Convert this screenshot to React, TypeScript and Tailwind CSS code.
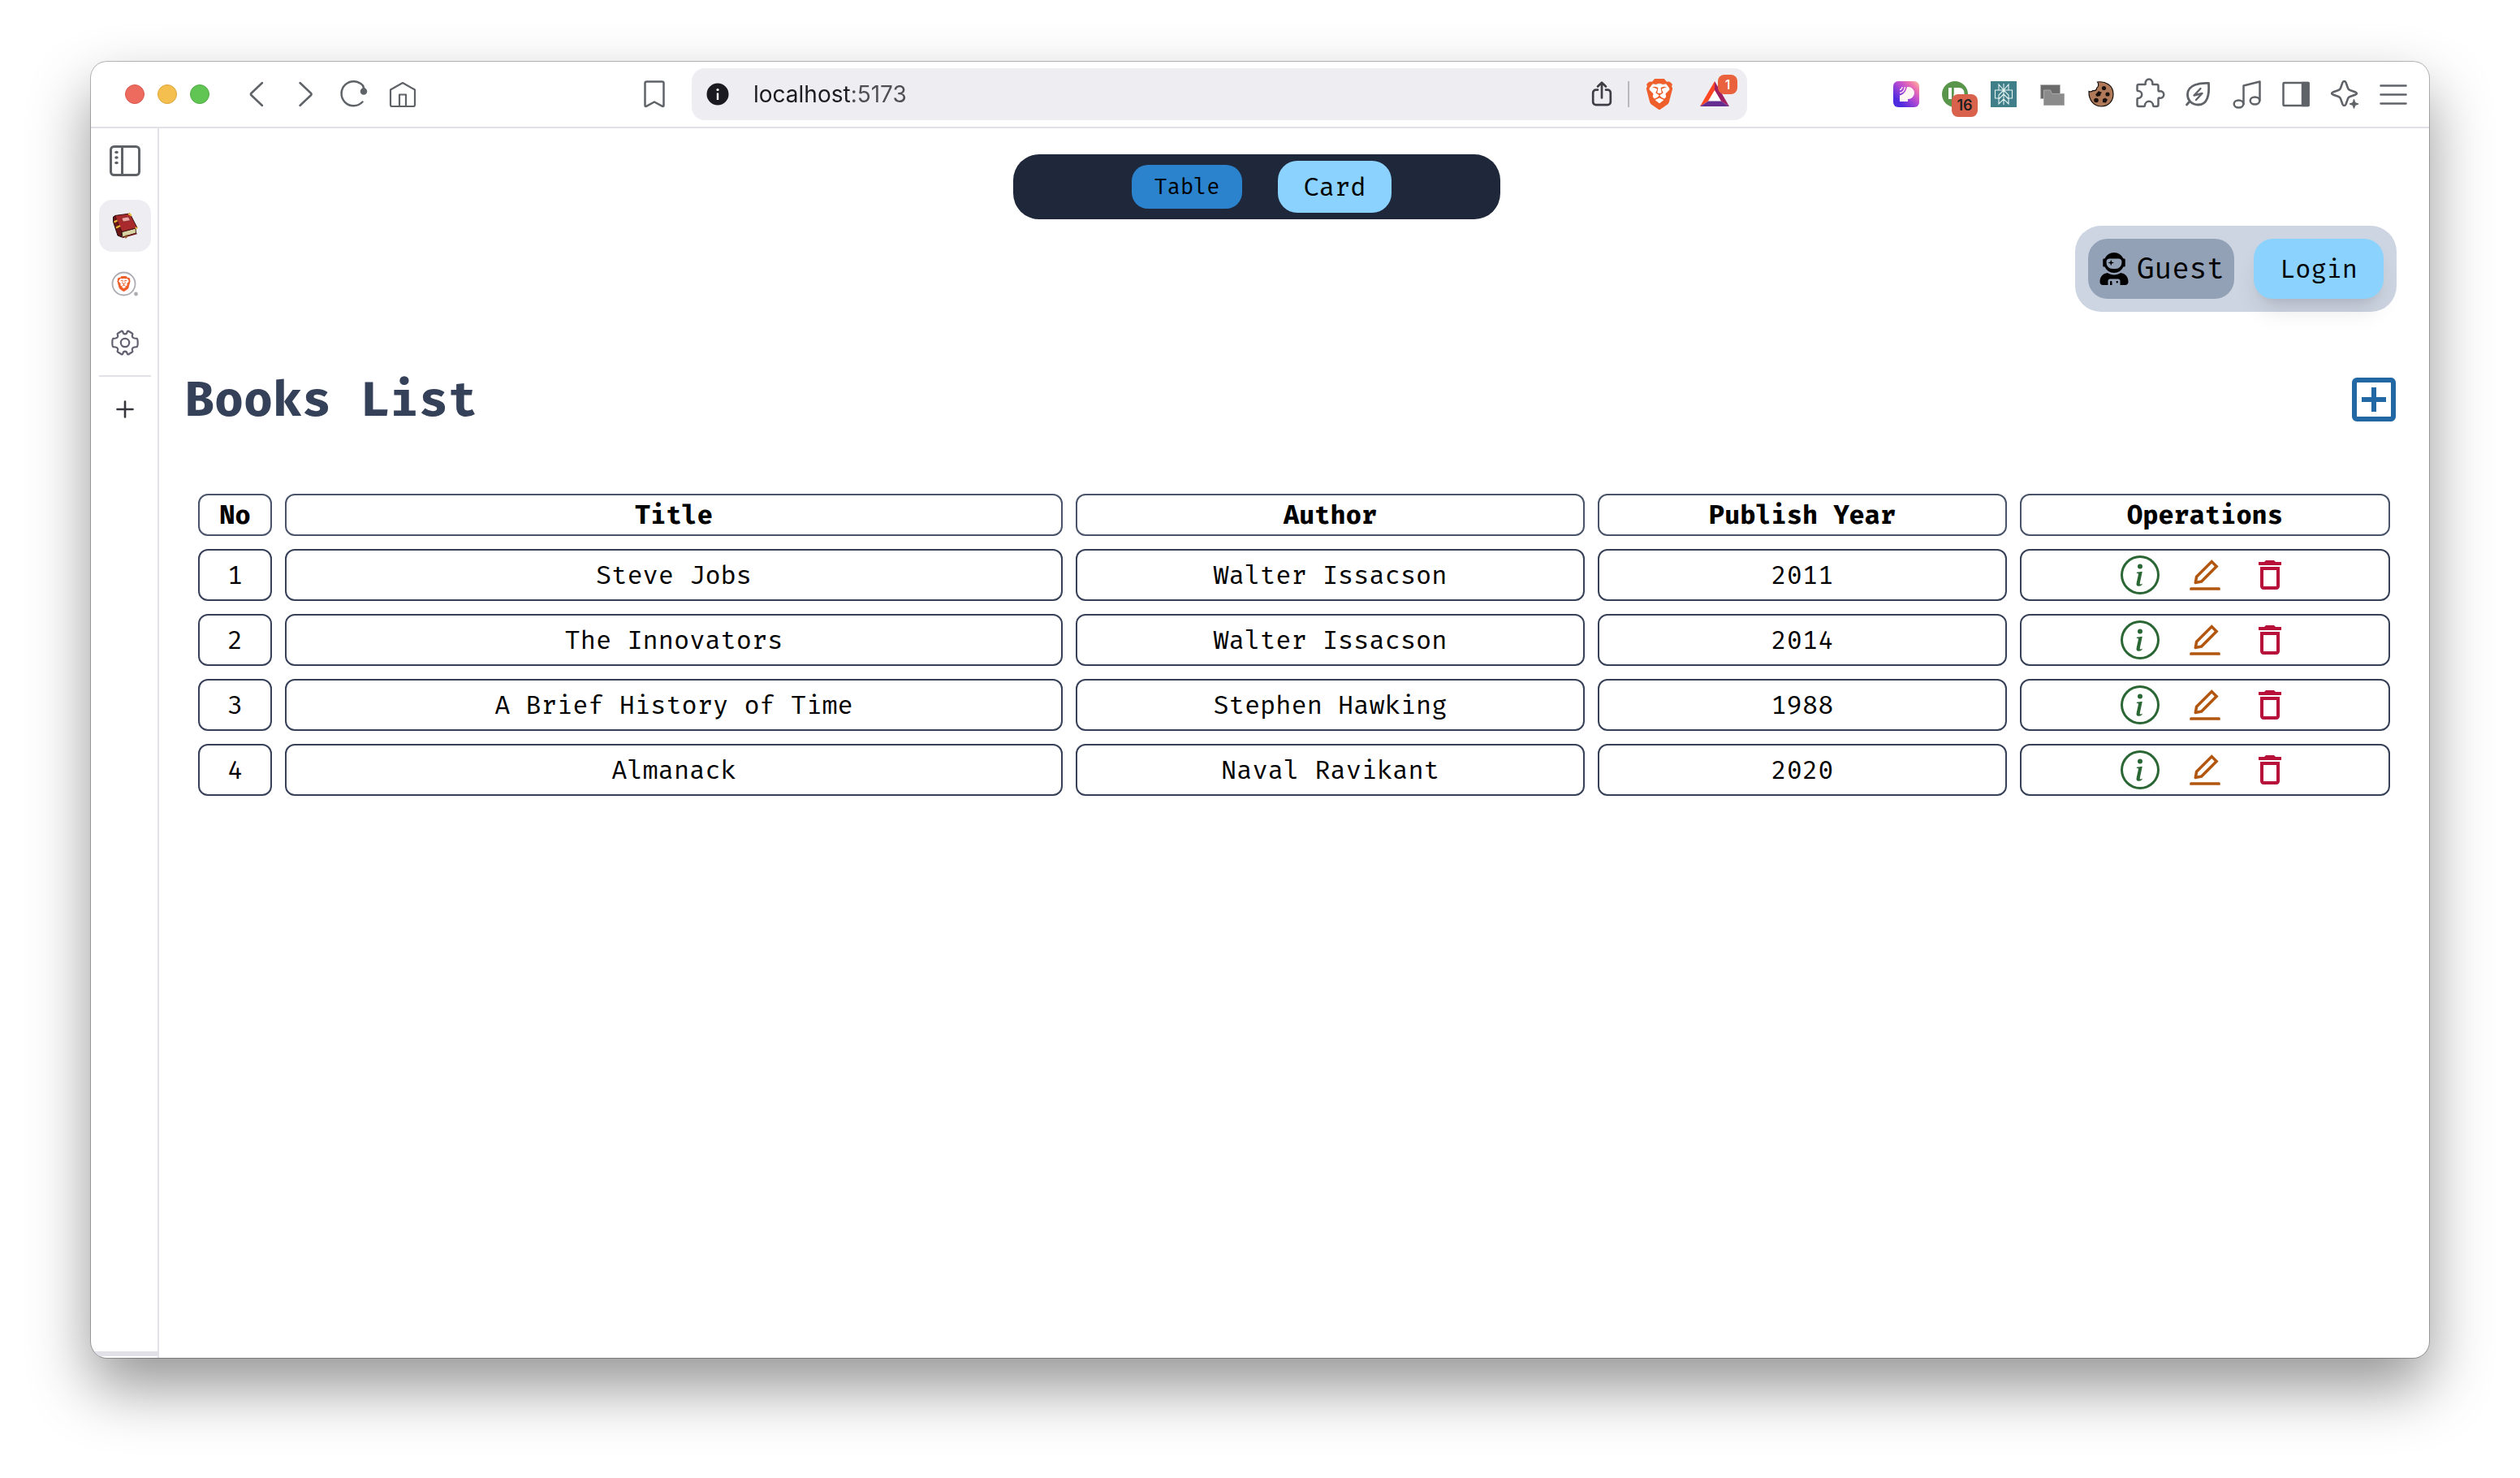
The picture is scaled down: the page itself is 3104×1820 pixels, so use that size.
import type { ReactNode } from "react";
import { AiOutlineEdit } from "react-icons/ai";
import { BsInfoCircle } from "react-icons/bs";
import { FaUserAstronaut } from "react-icons/fa";
import { MdOutlineAddBox, MdOutlineDelete } from "react-icons/md";
import { SiBrave } from "react-icons/si";

const books = [
  { no: 1, title: "Steve Jobs", author: "Walter Issacson", year: 2011 },
  { no: 2, title: "The Innovators", author: "Walter Issacson", year: 2014 },
  { no: 3, title: "A Brief History of Time", author: "Stephen Hawking", year: 1988 },
  { no: 4, title: "Almanack", author: "Naval Ravikant", year: 2020 },
];

const columns = [
  { label: "No", width: "w-[91px]" },
  { label: "Title", width: "w-[958px]" },
  { label: "Author", width: "w-[627px]" },
  { label: "Publish Year", width: "w-[504px]" },
  { label: "Operations", width: "w-[456px]" },
];

function Line({ children, size = 40, stroke = 2.5 }: { children: ReactNode; size?: number; stroke?: number }) {
  return (
    <svg
      width={size}
      height={size}
      viewBox="0 0 40 40"
      fill="none"
      stroke="currentColor"
      strokeWidth={stroke}
      strokeLinecap="round"
      strokeLinejoin="round"
      aria-hidden="true"
    >
      {children}
    </svg>
  );
}

function BarButton({ label, children }: { label: string; children: ReactNode }) {
  return (
    <button type="button" aria-label={label} className="relative flex h-15 w-15 shrink-0 items-center justify-center text-[#5f6368]">
      {children}
    </button>
  );
}

function SideButton({ label, active, children }: { label: string; active?: boolean; children: ReactNode }) {
  return (
    <button
      type="button"
      aria-label={label}
      className={
        active
          ? "flex h-16 w-16 items-center justify-center rounded-2xl bg-[#eeedf2]"
          : "flex h-16 w-16 items-center justify-center rounded-2xl text-[#5f6368]"
      }
    >
      {children}
    </button>
  );
}

function Lion({ size }: { size: number }) {
  return (
    <svg width={size} height={size} viewBox="0 0 24 24" aria-hidden="true">
      <path d="M5 5h14l1.500 6-3.500 7-5 4-5-4-3.500-7z" fill="#fff" />
      <SiBrave size={24} color="#ef5f2b" />
    </svg>
  );
}

function Toolbar() {
  return (
    <header className="flex h-[82px] items-center border-b-2 border-[#e2e1e8] pr-3.5 pl-[42px]">
      <div className="flex gap-4">
        <button type="button" aria-label="Close" className="h-6 w-6 rounded-full border border-[#d9574b] bg-[#ec6a5e]" />
        <button type="button" aria-label="Minimize" className="h-6 w-6 rounded-full border border-[#dba53d] bg-[#f4bf4f]" />
        <button type="button" aria-label="Zoom" className="h-6 w-6 rounded-full border border-[#51ab44] bg-[#61c554]" />
      </div>
      <nav className="ml-7 flex" aria-label="History">
        <BarButton label="Back">
          <Line><path d="M27 6 13.300 19a1.400 1.400 0 0 0 0 2L27 34" /></Line>
        </BarButton>
        <BarButton label="Forward">
          <Line><path d="M13.500 6 27.200 19a1.400 1.400 0 0 1 0 2L13.500 34" /></Line>
        </BarButton>
        <BarButton label="Reload">
          <Line>
            <path d="M30.500 29.500A15 15 0 1 1 31 9.500" />
            <path d="M31 9.500 33 15" />
            <circle cx="32" cy="16.500" r="3" fill="currentColor" />
          </Line>
        </BarButton>
        <BarButton label="Home">
          <Line stroke={2.2}>
            <path d="M5 14.500 20 6l15 8.500V33a2 2 0 0 1-2 2H7a2 2 0 0 1-2-2z" />
            <path d="M16 35V20.500h8V35" />
          </Line>
        </BarButton>
      </nav>
      <div className="ml-[250px]">
        <BarButton label="Bookmark">
          <Line>
            <path d="M8.500 6.500a2 2 0 0 1 2-2h19a2 2 0 0 1 2 2V34a1 1 0 0 1-1.600.8L20 29.500l-9.900 5.300A1 1 0 0 1 8.500 34z" />
          </Line>
        </BarButton>
      </div>
      <div className="mr-[166px] ml-4 flex h-16 flex-1 items-center rounded-2xl bg-[#eeedf2] pr-2 pl-[18px]">
        <button type="button" aria-label="Site information">
          <svg width="28" height="28" viewBox="0 0 28 28" aria-hidden="true">
            <circle cx="14" cy="14" r="13.500" fill="#1b1a20" />
            <circle cx="14" cy="8.500" r="1.600" fill="#fff" />
            <path d="M14 12.500v8.500" stroke="#fff" strokeWidth="2.400" />
          </svg>
        </button>
        <input
          type="text"
          aria-label="Address"
          defaultValue="localhost:5173"
          className="ml-[30px] min-w-0 flex-1 bg-[linear-gradient(to_right,#1b1a20_121px,#4f4e55_121px)] bg-clip-text font-['Inter',sans-serif] text-[28px] leading-9 text-transparent outline-none"
        />
        <button type="button" aria-label="Share" className="flex w-12 justify-center text-[#3f3e46]">
          <Line size={36} stroke={3}>
            <path d="M14.500 14H12a4 4 0 0 0-4 4v12.500a4 4 0 0 0 4 4h16a4 4 0 0 0 4-4V18a4 4 0 0 0-4-4h-2.500M20 25V4.500M14.500 9.500 20 4l5.500 5.500" />
          </Line>
        </button>
        <div className="ml-2 h-8 w-0.5 bg-[#b9b8bf]" />
        <button type="button" aria-label="Brave Shields" className="ml-[18px]">
          <Lion size={38} />
        </button>
        <button type="button" aria-label="Brave Rewards" className="relative ml-[17px] flex h-16 w-16 items-center justify-center">
          <svg width="40" height="34" viewBox="0 0 40 34" aria-hidden="true">
            <path d="M20 1 2 32l11-7 7-12z" fill="#ff4724" />
            <path d="M20 1v12l7 12 11 7z" fill="#9e1f63" />
            <path d="M2 32h36l-11-7H13z" fill="#662d91" />
            <path d="m20 12 8 13.500H12z" fill="#fff" />
          </svg>
          <span className="absolute top-2 right-1 flex h-6 w-6 items-center justify-center rounded-lg bg-[#e9613d] font-['Inter',sans-serif] text-base leading-6 font-medium text-white">
            1
          </span>
        </button>
      </div>
      <div className="flex">
        <BarButton label="Podcast extension">
          <svg width="32" height="32" viewBox="0 0 32 32" aria-hidden="true">
            <defs>
              <linearGradient id="podGradient" x1="0" y1="1" x2="1" y2="0">
                <stop offset="0.200" stopColor="#4d2bdf" />
                <stop offset="0.550" stopColor="#b64ad2" />
                <stop offset="0.800" stopColor="#f074ae" />
                <stop offset="1" stopColor="#f6c6a0" />
              </linearGradient>
            </defs>
            <rect width="32" height="32" rx="6" fill="url(#podGradient)" />
            <path d="M8 25V17.500c4.500-1 8-5 9-10.500h1.500a7.500 7.500 0 0 1 0 15H18v3z" fill="#fff5f3" />
            <path d="M8 10.500c1.500 0 3-1.500 3-3.500M8 14.500c3.500-.5 6-3.500 6.500-7.500" stroke="#fff5f3" strokeWidth="1.400" fill="none" />
          </svg>
        </BarButton>
        <BarButton label="Reading extension">
          <svg width="32" height="32" viewBox="0 0 32 32" aria-hidden="true">
            <circle cx="16" cy="16" r="16" fill="#59964b" />
            <path d="M8 8h4v14H8zM14.500 8h6c5 0 7 3 7 7s-2 7-7 7h-6zm3.500 3v8z" fill="#fff" />
            <path d="M12 8h2.500v8H12z" fill="#59964b" />
          </svg>
          <span className="absolute top-[30px] left-[26px] flex h-7 w-8 items-center justify-center rounded-lg bg-[#d9624d] font-['Inter',sans-serif] text-lg leading-7 font-semibold text-[#202020]">
            16
          </span>
        </BarButton>
        <BarButton label="Perplexity">
          <svg width="32" height="32" viewBox="0 0 32 32" aria-hidden="true">
            <rect width="32" height="32" fill="#407f8a" />
            <g stroke="#e6f4f1" strokeWidth="1.100" fill="none">
              <path d="M16 3v26M10 4v7h12V4l-6 7zM10 11H5.500v10H10M22 11h4.500v10H22M16 11l-6 6v11l6-6 6 6V17zM16 16l-6 6M16 16l6 6" />
            </g>
          </svg>
        </BarButton>
        <BarButton label="Window extension">
          <svg width="32" height="32" viewBox="0 0 32 32" aria-hidden="true">
            <path d="M1.500 4.500h24v17h-24z" fill="#6b6b6b" stroke="#b5b5b5" />
            <path d="M5.500 11h8l2 4.500h15v14h-25z" fill="#8b8b8b" stroke="#a9a9a9" />
          </svg>
        </BarButton>
        <BarButton label="Cookie editor">
          <svg width="34" height="34" viewBox="0 0 34 34" aria-hidden="true">
            <path
              d="M12.500 2C22 .5 32 6 32 17c0 8.500-6 15-14.500 15C9 32 1.500 25 2 13.500c2 1 3.500.5 5-1 2 .5 5-.5 4.500-3 2.500-1.500 3-5 1-7.500z"
              fill="#b07a5a"
              stroke="#15100d"
              strokeWidth="1.200"
            />
            <g fill="#1b1210">
              <circle cx="20.500" cy="9.500" r="2.600" />
              <circle cx="25" cy="17" r="2.600" />
              <circle cx="11" cy="24.500" r="2.800" />
              <path d="M10 17.500 14 13l3 2-1 4-4 1zM19 23l3-1.500 3 2-2 4-4-.5zM16 14l2 1-2 2z" />
            </g>
          </svg>
        </BarButton>
        <BarButton label="Extensions">
          <Line>
            <path d="M6.500 8H14c.8 0 1-.6.800-1.200a4.300 4.300 0 1 1 8.400 0c-.2.600 0 1.200.800 1.200h4.500a2 2 0 0 1 2 2v5.500c0 .8.600 1 1.200.9a4.300 4.300 0 1 1 0 8.200c-.6-.1-1.200.1-1.200.9V33a2 2 0 0 1-2 2H25c-.8 0-1-.5-1-1.200a5 5 0 0 0-10 0c0 .7-.2 1.200-1 1.200H6.500a2 2 0 0 1-2-2v-7c0-.8.500-1 1.200-1a4.500 4.500 0 0 0 0-9c-.7 0-1.200-.2-1.200-1v-5a2 2 0 0 1 2-2z" />
          </Line>
        </BarButton>
        <BarButton label="Energy saver">
          <Line stroke={2.800}>
            <path d="M32.500 6.500C22 6 7 8 6.500 20c-.2 7 5 13 13 13C31 33 33.500 21 32.500 6.500zM9 29l-3.500 4" />
            <path d="m22.500 13-8 8.500 10-2.500-7.500 8" strokeWidth="2.400" />
          </Line>
        </BarButton>
        <BarButton label="Playlist">
          <Line>
            <path d="M15.500 32V9.500l20-5V27.500" />
            <ellipse cx="9.500" cy="32" rx="5.800" ry="4.500" />
            <ellipse cx="29.500" cy="28" rx="5.800" ry="4.500" />
          </Line>
        </BarButton>
        <BarButton label="Side panel">
          <Line>
            <rect x="4.500" y="6" width="31" height="28" rx="1" />
            <path d="M28 6h7.500v28H28z" fill="currentColor" />
          </Line>
        </BarButton>
        <BarButton label="Leo AI">
          <Line>
            <path d="M17.500 5.500c1-2 3-2 4 0l2.500 7c.5 1.500 1 2 2.500 2.500l7 2.500c2 1 2 2 0 3l-7 2.500c-1.500.5-2 1-2.500 2.500l-2.500 7c-1 2-3 2-4 0l-2.500-7c-.5-1.500-1-2-2.500-2.500l-7-2.500c-2-1-2-2 0-3l7-2.500c1.500-.5 2-1 2.500-2.500z" />
            <path d="m31.500 26.500 1.500 4 4 1.500-4 1.500-1.500 4-1.500-4-4-1.500 4-1.500z" fill="currentColor" strokeWidth="1" />
          </Line>
        </BarButton>
        <BarButton label="Menu">
          <Line><path d="M4.500 9.500h31M4.500 20.500h31M4.500 31.500h31" /></Line>
        </BarButton>
      </div>
    </header>
  );
}

function Sidebar() {
  return (
    <aside className="flex w-[84px] shrink-0 flex-col border-r-2 border-[#e2e1e8] pt-2 pb-0.5">
      <div className="ml-2.5 flex w-16 flex-col gap-2">
        <div className="mb-2">
          <SideButton label="Toggle vertical tabs">
            <Line stroke={3}>
              <rect x="2.500" y="2.500" width="35" height="35" rx="4" />
              <path d="M16.500 3v34" />
              <g fill="currentColor" stroke="none">
                <ellipse cx="9.500" cy="9.500" rx="2.300" ry="1.800" />
                <ellipse cx="9.500" cy="16" rx="2.300" ry="1.800" />
                <ellipse cx="9.500" cy="22.500" rx="2.300" ry="1.800" />
              </g>
            </Line>
          </SideButton>
        </div>
        <SideButton label="Books List" active>
          <svg width="32" height="32" viewBox="0 0 32 32" aria-hidden="true">
            <path d="M1.500 5 5 3.500 12 23v7l-5-2L1.500 11z" fill="#6e1518" stroke="#1d1010" />
            <path d="m12 23.500 17-4.500.5 6L13 30z" fill="#d9d2a4" stroke="#3a2c18" />
            <path d="m12.500 30.500 18-5" stroke="#6e1518" strokeWidth="1.600" />
            <path d="M3.500 3.500 22 1l9 17.500L12 23.500z" fill="#a92a2c" stroke="#3a1010" />
            <path d="m12 6.500 8-1.500 2.500 4.500-9 1.500z" fill="#f0a9a6" stroke="#70201f" strokeWidth=".6" />
            <path d="m2.500 11.500 4-2M5 18.500l5-2.500M20 1.500l2.500.5 1 2M28.500 18.500l2.500.5" stroke="#e8bd33" strokeWidth="2" fill="none" />
            <path d="m16 28 .5 4 2-1.500V27z" fill="#8d5a26" />
          </svg>
        </SideButton>
        <SideButton label="Brave Search">
          <svg width="34" height="34" viewBox="0 0 34 34" aria-hidden="true">
            <circle cx="15.500" cy="16.500" r="14" fill="#fff" stroke="#adacb3" strokeWidth="1.800" />
            <circle cx="30.500" cy="29" r="2.400" fill="#adacb3" />
            <svg x="6" y="7" width="19" height="19" viewBox="0 0 24 24">
              <SiBrave size={24} color="#ef5f2b" />
            </svg>
          </svg>
        </SideButton>
        <SideButton label="Settings">
          <svg width="36" height="36" viewBox="0 0 36 36" fill="none" stroke="#626170" strokeWidth="2.200" strokeLinejoin="round" aria-hidden="true">
            <circle cx="18" cy="18" r="5.200" />
            <path d="M12.500 4.500Q14 2.800 15 4l1 2.500q2 1.500 4 0L21 4q1-1.200 2.500.5l3 1.800q1.500.7.500 2.200-1 3 2.500 4l3 .3q1.200.6 1.200 5.200t-1.200 5.200l-3 .3q-3.500 1-2.500 4 1 1.500-.5 2.200l-3 1.800Q22 33.200 21 32l-1-2.500q-2-1.500-4 0L15 32q-1 1.200-2.500-.5l-3-1.800Q8 29 9 27.500q1-3-2.500-4l-3-.3Q2.300 22.600 2.300 18t1.200-5.200l3-.3Q10 11.500 9 8.500 8 7 9.500 6.300z" />
          </svg>
        </SideButton>
        <div className="h-0.5 bg-[#e2e1e8]" />
        <SideButton label="New tab">
          <svg width="24" height="24" viewBox="0 0 24 24" stroke="#36353c" strokeWidth="2.600" strokeLinecap="round" aria-hidden="true">
            <path d="M12 2.500v19M2.500 12h19" />
          </svg>
        </SideButton>
      </div>
      <div className="mt-auto h-1.5 w-full bg-[#e2e1e8]" />
    </aside>
  );
}

function BooksTable() {
  return (
    <table className="w-full table-fixed border-separate border-spacing-4 text-center text-[32px] leading-12 text-black">
      <thead>
        <tr>
          {columns.map((column) => (
            <th key={column.label} scope="col" className={`${column.width} h-13 rounded-xl border-2 border-[#49546a] p-0 font-bold`}>
              {column.label}
            </th>
          ))}
        </tr>
      </thead>
      <tbody>
        {books.map((book) => (
          <tr key={book.no}>
            <td className="h-16 rounded-xl border-2 border-[#364158] p-0">{book.no}</td>
            <td className="h-16 rounded-xl border-2 border-[#364158] p-0">{book.title}</td>
            <td className="h-16 rounded-xl border-2 border-[#364158] p-0">{book.author}</td>
            <td className="h-16 rounded-xl border-2 border-[#364158] p-0">{book.year}</td>
            <td className="h-16 rounded-xl border-2 border-[#364158] p-0">
              <div className="flex justify-center gap-8">
                <a href={`#/books/details/${book.no}`} aria-label={`Details of ${book.title}`}>
                  <BsInfoCircle size={48} color="#2a6735" />
                </a>
                <a href={`#/books/edit/${book.no}`} aria-label={`Edit ${book.title}`}>
                  <AiOutlineEdit size={48} color="#b2560f" />
                </a>
                <a href={`#/books/delete/${book.no}`} aria-label={`Delete ${book.title}`}>
                  <MdOutlineDelete size={48} color="#b8123a" />
                </a>
              </div>
            </td>
          </tr>
        ))}
      </tbody>
    </table>
  );
}

export default function App() {
  return (
    <div className="flex min-h-screen flex-col overflow-hidden bg-white px-28 pt-[76px] pb-[148px]">
      <div className="flex flex-1 flex-col rounded-[20px] bg-white shadow-[0_0_0_1px_rgba(0,0,0,0.26),0_36px_76px_rgba(0,0,0,0.42)]">
        <Toolbar />
        <div className="flex flex-1 overflow-hidden rounded-b-[20px]">
          <Sidebar />
          <main className="flex-1 p-8 font-['Fira_Mono','Fira_Code','Liberation_Mono',monospace] text-black">
            <div className="flex justify-center pr-[92px]">
              <div className="flex h-20 w-[600px] items-center justify-center gap-8 rounded-[32px] bg-[#1f283b]">
                <div className="flex w-40 justify-center">
                  <button type="button" className="h-[54px] w-[136px] rounded-[20px] bg-[#2b82cd] text-[27px] leading-9">
                    Table
                  </button>
                </div>
                <button type="button" className="h-16 w-[140px] rounded-3xl bg-[#8cd2fe] text-[32px] leading-12">
                  Card
                </button>
              </div>
            </div>
            <div className="mt-2 mr-2 flex justify-end">
              <div className="flex gap-6 rounded-[32px] bg-[#cdd5e2] p-4">
                <div className="flex h-[74px] items-center gap-2 rounded-3xl bg-[#93a1b7] px-3 text-[36px] leading-14">
                  <FaUserAstronaut size={40} />
                  <span>Guest</span>
                </div>
                <button
                  type="button"
                  className="h-[74px] rounded-3xl bg-[#8cd2fe] px-8 text-[32px] leading-12 shadow-[0_20px_30px_-6px_rgba(0,0,0,0.1),0_8px_12px_-8px_rgba(0,0,0,0.1)]"
                >
                  Login
                </button>
              </div>
            </div>
            <div className="mt-[72px] mb-16 flex items-center justify-between">
              <h1 className="text-[60px] leading-[72px] font-bold text-[#354158]">Books List</h1>
              <a href="#/books/create" aria-label="Add book">
                <MdOutlineAddBox size={72} color="#2268a5" />
              </a>
            </div>
            <BooksTable />
          </main>
        </div>
      </div>
    </div>
  );
}
